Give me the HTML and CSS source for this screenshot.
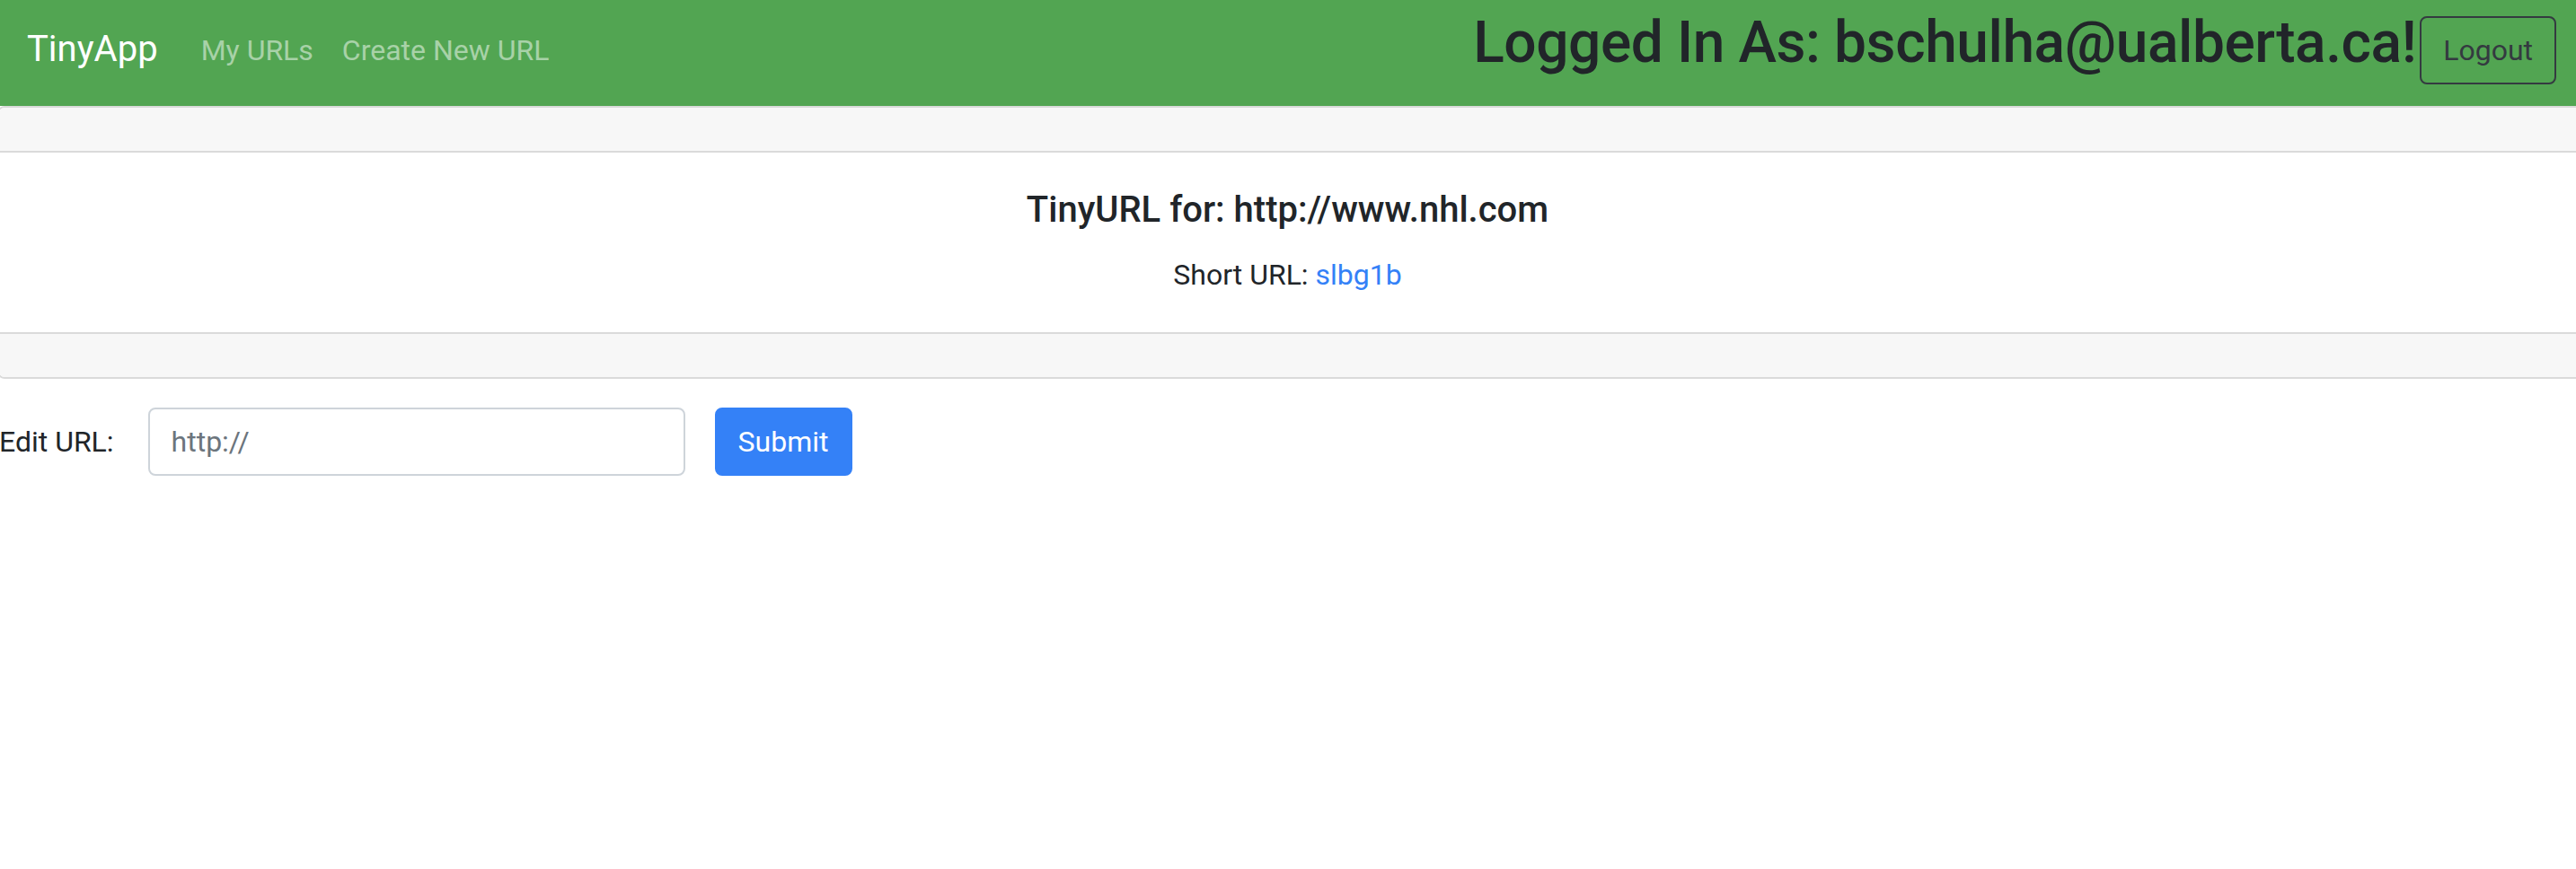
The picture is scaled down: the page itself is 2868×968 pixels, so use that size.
FILE: index.html
```html
<!DOCTYPE html>
<html lang="en">
<head>
<meta charset="utf-8">
<title>TinyApp</title>
<link rel="stylesheet" href="styles.css">
</head>
<body>
<nav class="navbar">
  <a class="brand" href="#">TinyApp</a>
  <ul class="nav-links">
    <li><a class="nav-link" href="#">My URLs</a></li>
    <li><a class="nav-link" href="#">Create New URL</a></li>
  </ul>
  <h2 class="user">Logged In As: bschulha@ualberta.ca!</h2>
  <button class="btn-logout" type="button">Logout</button>
</nav>
<main class="content">
  <section class="card">
    <div class="card-header"></div>
    <div class="card-body">
      <h5 class="card-title">TinyURL for: http://www.nhl.com</h5>
      <p class="card-text">Short URL: <a class="short-link" href="#">slbg1b</a></p>
    </div>
    <div class="card-footer"></div>
  </section>
  <form class="edit-form">
    <label class="edit-label" for="longURL">Edit URL:</label>
    <input class="form-control" id="longURL" type="text" placeholder="http://">
    <button class="btn-primary" type="submit">Submit</button>
  </form>
</main>
</body>
</html>
```
FILE: styles.css
```css
* { box-sizing: border-box; }
html, body { margin: 0; padding: 0; }
body {
  font-family: Roboto, "Noto Sans", sans-serif;
  font-size: 32px;
  line-height: 1.5;
  color: #212529;
  background: #fff;
  overflow-x: hidden;
}
a { text-decoration: none; }

.navbar {
  display: flex;
  align-items: flex-start;
  height: 118px;
  padding: 10px 22px 0 30px;
  background: #52a552;
}
.brand {
  margin-top: 15px;
  font-size: 40px;
  line-height: 60px;
  color: #fff;
  margin-right: 32px;
}
.nav-links {
  display: flex;
  list-style: none;
  margin: 22px 0 0 0;
  padding: 0;
}
.nav-link {
  display: block;
  padding: 0 16px;
  line-height: 48px;
  color: rgba(255,255,255,.5);
}
.user {
  margin: 0 0 0 auto;
  font-size: 64px;
  line-height: 1.2;
  font-weight: 500;
  letter-spacing: -0.4px;
  color: #212529;
}
.btn-logout {
  margin: 8px 0 0 4px;
  font-family: inherit;
  font-size: 32px;
  line-height: 48px;
  padding: 12px 24px;
  border: 2px solid #343a40;
  border-radius: 8px;
  background: transparent;
  color: #343a40;
}

.content { margin-left: -3px; }

.card {
  border: 2px solid #dadada;
  border-right: 0;
  border-radius: 8px 0 0 8px;
  overflow: hidden;
}
.card-header {
  height: 50px;
  background: #f7f7f7;
  border-bottom: 2px solid #dadada;
}
.card-body {
  padding: 40px;
  text-align: center;
}
.card-title {
  margin: 0 0 24px;
  font-size: 40px;
  line-height: 48px;
  font-weight: 500;
}
.card-text { margin: 0; }
.short-link { color: #3481f7; }
.card-footer {
  height: 50px;
  background: #f7f7f7;
  border-top: 2px solid #dadada;
}

.edit-form {
  display: flex;
  align-items: center;
  margin: 32px 0 0 2px;
}
.edit-label { margin-right: 38px; }
.form-control {
  width: 598px;
  height: 76px;
  padding: 12px 24px;
  font-family: inherit;
  font-size: 32px;
  color: #495057;
  border: 2px solid #ced4da;
  border-radius: 8px;
  margin-right: 33px;
}
.form-control::placeholder { color: #6c757d; }
.btn-primary {
  height: 76px;
  padding: 12px 24px;
  font-family: inherit;
  font-size: 32px;
  line-height: 48px;
  color: #fff;
  background: #3481f7;
  border: 2px solid #3481f7;
  border-radius: 8px;
}
```
